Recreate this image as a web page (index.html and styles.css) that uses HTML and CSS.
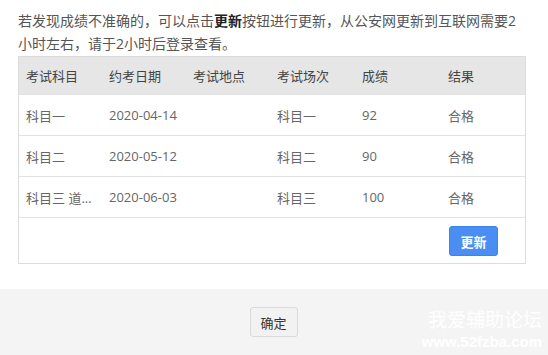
FILE: index.html
```html
<!DOCTYPE html>
<html lang="zh-CN">
<head>
<meta charset="utf-8">
<title>成绩</title>
<link rel="stylesheet" href="styles.css">
</head>
<body>
<div class="page">
  <div class="content">
    <p class="notice">若发现成绩不准确的，可以点击<b>更新</b>按钮进行更新，从公安网更新到互联网需要2小时左右，请于2小时后登录查看。</p>
    <div class="table">
      <div class="row head">
        <div class="cell">考试科目</div>
        <div class="cell">约考日期</div>
        <div class="cell">考试地点</div>
        <div class="cell">考试场次</div>
        <div class="cell">成绩</div>
        <div class="cell">结果</div>
      </div>
      <div class="row">
        <div class="cell">科目一</div>
        <div class="cell">2020-04-14</div>
        <div class="cell"></div>
        <div class="cell">科目一</div>
        <div class="cell">92</div>
        <div class="cell">合格</div>
      </div>
      <div class="row">
        <div class="cell">科目二</div>
        <div class="cell">2020-05-12</div>
        <div class="cell"></div>
        <div class="cell">科目二</div>
        <div class="cell">90</div>
        <div class="cell">合格</div>
      </div>
      <div class="row">
        <div class="cell">科目三 道...</div>
        <div class="cell">2020-06-03</div>
        <div class="cell"></div>
        <div class="cell">科目三</div>
        <div class="cell">100</div>
        <div class="cell">合格</div>
      </div>
      <div class="actions">
        <button class="btn-update">更新</button>
      </div>
    </div>
  </div>
  <div class="footer">
    <button class="btn-ok">确定</button>
    <div class="watermark">
      <div class="wm-cn">我爱辅助论坛</div>
      <div class="wm-url">www.52fzba.com</div>
    </div>
  </div>
</div>
</body>
</html>
```

FILE: styles.css
```css
* { box-sizing: border-box; }
html, body {
  margin: 0;
  padding: 0;
  background: #fff;
}
body {
  font-family: "Open Sans", "Noto Sans CJK SC", sans-serif;
  color: #333;
  width: 548px;
  height: 355px;
  overflow: hidden;
}
.page {
  display: flex;
  flex-direction: column;
  height: 355px;
}
.content {
  padding: 9px 22px 0 18px;
  height: 289px;
}
.notice {
  margin: 0;
  font-size: 14px;
  line-height: 23px;
  color: #555;
}
.notice b {
  color: #222;
  font-weight: bold;
}
.table {
  margin-top: 1px;
  width: 508px;
  border: 1px solid #dcdcdc;
  font-size: 13px;
  color: #666;
}
.row {
  display: grid;
  grid-template-columns: 83px 84px 84px 85px 86px 1fr;
  height: 41px;
  border-top: 1px solid #e2e2e2;
  align-items: center;
}
.row.head {
  height: 37px;
  border-top: 0;
  background: #e6e6e6;
  color: #444;
}
.cell {
  padding-left: 7px;
  white-space: nowrap;
  overflow: hidden;
}
.actions {
  border-top: 1px solid #e2e2e2;
  height: 46px;
  display: flex;
  justify-content: flex-end;
  align-items: flex-start;
  padding: 8px 27px 0 0;
}
.btn-update {
  width: 49px;
  height: 30px;
  border: 1px solid #3f82ea;
  border-radius: 3px;
  background: #4a8ef3;
  color: #fff;
  font-family: "Noto Sans CJK SC", sans-serif;
  font-size: 13px;
  font-weight: bold;
  padding: 0;
}
.footer {
  position: relative;
  flex: 1;
  background: #f4f4f4;
  display: flex;
  justify-content: center;
  align-items: center;
  padding-left: 0;
}
.btn-ok {
  width: 48px;
  height: 30px;
  border: 1px solid #dadada;
  border-radius: 3px;
  background: #f2f2f2;
  color: #333;
  font-family: "Noto Sans CJK SC", sans-serif;
  font-size: 13px;
  padding: 0;
  margin-left: -1px;
}
.watermark {
  position: absolute;
  right: 6px;
  bottom: 6px;
  color: #fff;
  text-align: right;
  line-height: 1;
}
.wm-cn {
  font-family: "Noto Sans CJK SC", sans-serif;
  font-size: 19px;
  letter-spacing: 0;
}
.wm-url {
  font-family: "Liberation Sans", sans-serif;
  font-size: 15px;
  font-weight: bold;
  margin-top: 6px;
}
```
